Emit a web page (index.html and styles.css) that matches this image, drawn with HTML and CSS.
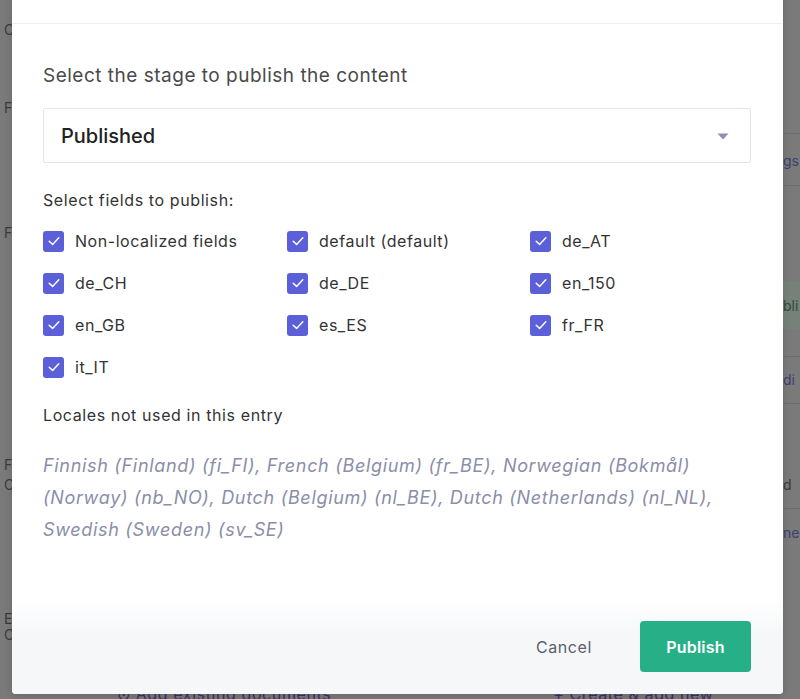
FILE: index.html
```html
<!DOCTYPE html>
<html lang="en">
<head>
<meta charset="utf-8">
<title>Publish</title>
<link rel="stylesheet" href="styles.css">
</head>
<body>
<div class="bg">
  <div class="bg-main">
    <div class="bg-left">
      <span class="l1">C</span>
      <span class="l2">F</span>
      <span class="l3">F</span>
      <span class="l4">F</span>
      <span class="l5">C</span>
      <span class="l6">E</span>
      <span class="l7">C</span>
    </div>
    <div class="bg-center"></div>
    <div class="bg-right">
      <div class="r-line r1"></div>
      <div class="r-text r2">gs</div>
      <div class="r-line r3"></div>
      <div class="r-green"><span>bli</span></div>
      <div class="r-line r4"></div>
      <div class="r-text r5">di</div>
      <div class="r-line r6"></div>
      <div class="r-text r7 grey">d</div>
      <div class="r-line r8"></div>
      <div class="r-text r9">ne</div>
    </div>
  </div>
  <div class="bg-bottom">
    <span class="b1">⊙ Add existing documents</span>
    <span class="b2">+ Create &amp; add new</span>
  </div>
</div>

<div class="modal">
  <div class="modal-header"></div>
  <div class="modal-body">
    <h2 class="title">Select the stage to publish the content</h2>
    <div class="select">
      <span class="select-value">Published</span>
      <svg class="caret" width="12" height="7" viewBox="0 0 12 7"><path d="M0.5 0.5 L11.5 0.5 L6 6.5 Z" fill="#8e90b3"/></svg>
    </div>
    <div class="label">Select fields to publish:</div>
    <div class="fields">
      <label class="field"><span class="cb"><svg width="20" height="20" viewBox="0 0 20 20"><path d="M5.2 10.2 L8.6 13.4 L14.8 6.8" fill="none" stroke="#fff" stroke-width="1.5" stroke-linecap="round" stroke-linejoin="round"/></svg></span>Non-localized fields</label>
      <label class="field"><span class="cb"><svg width="20" height="20" viewBox="0 0 20 20"><path d="M5.2 10.2 L8.6 13.4 L14.8 6.8" fill="none" stroke="#fff" stroke-width="1.5" stroke-linecap="round" stroke-linejoin="round"/></svg></span>default (default)</label>
      <label class="field"><span class="cb"><svg width="20" height="20" viewBox="0 0 20 20"><path d="M5.2 10.2 L8.6 13.4 L14.8 6.8" fill="none" stroke="#fff" stroke-width="1.5" stroke-linecap="round" stroke-linejoin="round"/></svg></span>de_AT</label>
      <label class="field"><span class="cb"><svg width="20" height="20" viewBox="0 0 20 20"><path d="M5.2 10.2 L8.6 13.4 L14.8 6.8" fill="none" stroke="#fff" stroke-width="1.5" stroke-linecap="round" stroke-linejoin="round"/></svg></span>de_CH</label>
      <label class="field"><span class="cb"><svg width="20" height="20" viewBox="0 0 20 20"><path d="M5.2 10.2 L8.6 13.4 L14.8 6.8" fill="none" stroke="#fff" stroke-width="1.5" stroke-linecap="round" stroke-linejoin="round"/></svg></span>de_DE</label>
      <label class="field"><span class="cb"><svg width="20" height="20" viewBox="0 0 20 20"><path d="M5.2 10.2 L8.6 13.4 L14.8 6.8" fill="none" stroke="#fff" stroke-width="1.5" stroke-linecap="round" stroke-linejoin="round"/></svg></span>en_150</label>
      <label class="field"><span class="cb"><svg width="20" height="20" viewBox="0 0 20 20"><path d="M5.2 10.2 L8.6 13.4 L14.8 6.8" fill="none" stroke="#fff" stroke-width="1.5" stroke-linecap="round" stroke-linejoin="round"/></svg></span>en_GB</label>
      <label class="field"><span class="cb"><svg width="20" height="20" viewBox="0 0 20 20"><path d="M5.2 10.2 L8.6 13.4 L14.8 6.8" fill="none" stroke="#fff" stroke-width="1.5" stroke-linecap="round" stroke-linejoin="round"/></svg></span>es_ES</label>
      <label class="field"><span class="cb"><svg width="20" height="20" viewBox="0 0 20 20"><path d="M5.2 10.2 L8.6 13.4 L14.8 6.8" fill="none" stroke="#fff" stroke-width="1.5" stroke-linecap="round" stroke-linejoin="round"/></svg></span>fr_FR</label>
      <label class="field"><span class="cb"><svg width="20" height="20" viewBox="0 0 20 20"><path d="M5.2 10.2 L8.6 13.4 L14.8 6.8" fill="none" stroke="#fff" stroke-width="1.5" stroke-linecap="round" stroke-linejoin="round"/></svg></span>it_IT</label>
    </div>
    <div class="label label-locales">Locales not used in this entry</div>
    <p class="unused">Finnish (Finland) (fi_FI), French (Belgium) (fr_BE), Norwegian (Bokmål) (Norway) (nb_NO), Dutch (Belgium) (nl_BE), Dutch (Netherlands) (nl_NL), Swedish (Sweden) (sv_SE)</p>
  </div>
  <div class="modal-footer">
    <button class="btn-cancel">Cancel</button>
    <button class="btn-publish">Publish</button>
  </div>
</div>
</body>
</html>
```

FILE: styles.css
```css
* { box-sizing: border-box; }

html, body {
  margin: 0;
  padding: 0;
  width: 800px;
  height: 699px;
  overflow: hidden;
}

body {
  background: #7a7a7a;
  font-family: Inter, "Noto Sans", "Liberation Sans", sans-serif;
  position: relative;
}

/* ---------- dimmed page behind the overlay ---------- */
.bg {
  height: 699px;
  display: flex;
  flex-direction: column;
}

.bg-main {
  flex: 1;
  display: grid;
  grid-template-columns: 14px 1fr 60px;
}

.bg-left {
  display: flex;
  flex-direction: column;
  color: #3a3a3a;
  font-size: 14px;
  line-height: 16px;
  padding-left: 4px;
}
.bg-left span { display: block; }
.l1 { margin-top: 22px; }
.l2 { margin-top: 62px; }
.l3 { margin-top: 109px; }
.l4 { margin-top: 216px; }
.l5 { margin-top: 4px; }
.l6 { margin-top: 118px; }
.l7 { margin-top: 0px; }

.bg-right {
  display: flex;
  flex-direction: column;
  overflow: hidden;
}

.r-line {
  height: 1px;
  background: #6e6e6e;
  margin-left: 40px;
}
.r1 { margin-top: 133px; }
.r-text {
  color: #3f3f70;
  font-size: 14px;
  line-height: 20px;
  padding-left: 43px;
}
.r-text.grey { color: #3a3a3a; }
.r2 { margin-top: 17px; }
.r3 { margin-top: 14px; }
.r-green {
  margin-top: 95px;
  height: 48px;
  background: #768279;
  margin-left: 40px;
  display: flex;
  align-items: center;
  color: #2f4a3a;
  font-size: 14px;
  padding-left: 3px;
}
.r4 { margin-top: 27px; }
.r5 { margin-top: 13px; }
.r6 { margin-top: 13px; }
.r7 { margin-top: 71px; }
.r8 { margin-top: 13px; }
.r9 { margin-top: 14px; }

.bg-bottom {
  height: 10px;
  display: flex;
  align-items: flex-end;
  color: #33336a;
  font-size: 16px;
  letter-spacing: 0.6px;
  line-height: 10px;
  overflow: hidden;
}
.b1 { margin-left: 117px; }
.b2 { margin-left: 222px; }

/* ---------- modal ---------- */
.modal {
  position: absolute;
  left: 12px;
  top: -40px;
  width: 771px;
  height: 734px;
  background: #fff;
  border-radius: 4px;
  display: flex;
  flex-direction: column;
  box-shadow: 0 2px 8px rgba(0,0,0,0.15);
}

.modal-header {
  height: 64px;
  border-bottom: 1px solid #eceef3;
  flex: none;
}

.modal-body {
  flex: 1;
  padding: 41px 32px 0 31px;
}

.title {
  margin: 0;
  font-size: 19px;
  line-height: 22px;
  letter-spacing: 0.5px;
  font-weight: 400;
  color: #4a4a4a;
}

.select {
  margin-top: 21px;
  height: 55px;
  border: 1px solid #e3e5ec;
  border-radius: 2px;
  display: flex;
  align-items: center;
  justify-content: space-between;
  padding: 0 21px 0 17px;
}

.select-value {
  font-size: 20px;
  color: #222;
  font-weight: 500;
}

.caret { display: block; margin-top: 1px; }

.label {
  margin-top: 27px;
  font-size: 16px;
  line-height: 20px;
  letter-spacing: 0.6px;
  color: #333;
}

.fields {
  margin-top: 10px;
  display: grid;
  grid-template-columns: 244px 243px 1fr;
  grid-auto-rows: 42px;
}

.field {
  display: flex;
  align-items: center;
  gap: 11px;
  font-size: 16px;
  letter-spacing: 0.55px;
  color: #333;
}

.cb {
  width: 21px;
  height: 21px;
  border-radius: 3px;
  background: #5b5fd8;
  display: flex;
  align-items: center;
  justify-content: center;
  flex: none;
}
.cb svg { display: block; }

.label-locales { margin-top: 17px; }

.unused {
  margin: 25px 0 0;
  font-size: 18px;
  line-height: 32px;
  letter-spacing: 0.68px;
  font-style: italic;
  color: #8b8ea8;
}

.modal-footer {
  flex: none;
  height: 97px;
  display: flex;
  align-items: flex-end;
  justify-content: flex-end;
  padding: 0 32px 22px 0;
  background: linear-gradient(#fff 0%, #f6f7f9 40%, #f6f7f9 100%);
  border-radius: 0 0 4px 4px;
}

.btn-cancel {
  font-family: inherit;
  font-size: 16px;
  letter-spacing: 0.6px;
  color: #5c5f6b;
  background: none;
  border: none;
  padding: 0 24px;
  margin-right: 24px;
  height: 51px;
}

.btn-publish {
  font-family: inherit;
  font-size: 16px;
  font-weight: 600;
  letter-spacing: 0.2px;
  color: #fff;
  background: #27b087;
  border: none;
  border-radius: 4px;
  width: 111px;
  height: 51px;
}
```
